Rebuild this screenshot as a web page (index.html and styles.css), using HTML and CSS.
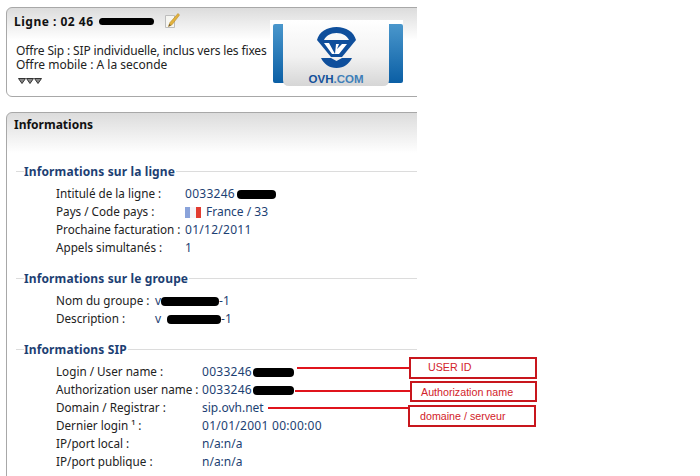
FILE: index.html
```html
<!DOCTYPE html>
<html lang="fr">
<head>
  <meta charset="UTF-8">
  <title>Ligne SIP</title>
  <link rel="stylesheet" href="styles.css">
</head>
<body>
  <div class="page">
    <!-- Line summary -->
    <div class="card card-top">
      <div class="card-text">
        <div class="line-title">
          <span class="num-title">Ligne : 02 46</span>
          <span class="mask mask-title"></span>
          <svg class="pencil" viewBox="0 0 16 16" width="16" height="16">
            <path d="M1.5 2.500h9v12h-9z" fill="#f6f6f2" stroke="#bdbdbd"/>
            <path d="M14 0.500 L6 9.500 L4.500 13.500 L8 11.800 L15.500 2z" fill="#e2b23c" stroke="#b98a28" stroke-width="0.6"/>
            <path d="M4.500 13.500l0.700-2.600 1.900 1.400z" fill="#6b5a38"/>
          </svg>
        </div>
        <div class="offer offer-sip">Offre Sip : SIP individuelle, inclus vers les fixes</div>
        <div class="offer">Offre mobile : A la seconde</div>
        <svg class="more" viewBox="0 0 24 6" width="24" height="6">
          <path d="M0.500 0.500h7l-3.500 5zM8.500 0.500h7l-3.500 5zM16.500 0.500h7l-3.500 5z" fill="#888" stroke="#333" stroke-width="1"/>
        </svg>
      </div>
      <div class="logo">
        <svg viewBox="0 0 133 66" width="133" height="66">
          <defs>
            <linearGradient id="side" x1="0" y1="0" x2="0" y2="1">
              <stop offset="0" stop-color="#4a97cc"/>
              <stop offset="1" stop-color="#0b5fa5"/>
            </linearGradient>
            <linearGradient id="tab" x1="0" y1="0" x2="0" y2="1">
              <stop offset="0" stop-color="#ffffff"/>
              <stop offset="0.55" stop-color="#f2f2f2"/>
              <stop offset="1" stop-color="#d6d6d6"/>
            </linearGradient>
          </defs>
          <rect width="133" height="66" fill="#fff"/>
          <rect x="3" y="4" width="130" height="59" rx="2" fill="url(#side)"/>
          <path d="M13 0H119V60q0 6-6 6H19q-6 0-6-6z" fill="url(#tab)"/>
          <!-- emblem -->
          <path d="M47 20C49 12 57 7 66.500 7S84 12 86 20H79C77 16 73 13 66.500 13S56 16 54 20z" fill="#0f4f9c"/>
          <path d="M47 20H86L72 37H61z" fill="#0f4f9c"/>
          <path d="M54 23H59L65 34H62zM66 24H69L67 29 72 24H77L69 34H65z" fill="#fff"/>
          <path d="M51 38H61L66.500 41 72 38H82C79 44 74 48 66.500 48S54 44 51 38z" fill="#0f4f9c"/>
          <text x="66" y="63" class="logo-text"><tspan fill="#12509a">OVH</tspan><tspan fill="#3f7fb8">.COM</tspan></text>
        </svg>
      </div>
    </div>

    <!-- Details -->
    <div class="card card-info">
      <div class="info-title">Informations</div>

      <div class="section section-line">
        <h3 class="section-title"><span>Informations sur la ligne</span></h3>
        <div class="row"><span class="label w-line">Intitulé de la ligne :</span><span class="value num">0033246<span class="mask mask-a"></span></span></div>
        <div class="row"><span class="label w-line">Pays / Code pays :</span><span class="value">
          <svg class="flag" viewBox="0 0 16 11" width="16" height="11">
            <rect width="16" height="11" fill="#f4f4f8"/>
            <rect width="5" height="11" fill="#8aa3da"/>
            <rect x="11" width="5" height="11" fill="#e23b30"/>
          </svg>France / 33</span></div>
        <div class="row"><span class="label w-line">Prochaine facturation :</span><span class="value num">01/12/2011</span></div>
        <div class="row"><span class="label w-line">Appels simultanés :</span><span class="value">1</span></div>
      </div>

      <div class="section section-group">
        <h3 class="section-title"><span>Informations sur le groupe</span></h3>
        <div class="row"><span class="label w-group">Nom du groupe :</span><span class="value">v<span class="mask mask-b"></span>-1</span></div>
        <div class="row"><span class="label w-group">Description :</span><span class="value">v<span class="mask mask-c"></span>-1</span></div>
      </div>

      <div class="section section-sip">
        <h3 class="section-title"><span>Informations SIP</span></h3>
        <div class="row"><span class="label w-sip">Login / User name :</span><span class="value num">0033246<span class="mask mask-d"></span></span></div>
        <div class="row"><span class="label w-sip">Authorization user name :</span><span class="value num">0033246<span class="mask mask-d"></span></span></div>
        <div class="row"><span class="label w-sip">Domain / Registrar :</span><span class="value">sip.ovh.net</span></div>
        <div class="row"><span class="label w-sip">Dernier login ¹ :</span><span class="value num">01/01/2001 00:00:00</span></div>
        <div class="row"><span class="label w-sip">IP/port local :</span><span class="value">n/a:n/a</span></div>
        <div class="row"><span class="label w-sip">IP/port publique :</span><span class="value">n/a:n/a</span></div>
      </div>
    </div>
  </div>

  <!-- Red notes drawn over the screenshot -->
  <div class="note note-user">USER ID</div>
  <div class="note note-auth">Authorization name</div>
  <div class="note note-domain">domaine / serveur</div>
  <div class="lead lead-user"></div>
  <div class="lead lead-auth"></div>
  <div class="lead lead-domain"></div>
</body>
</html>
```

FILE: styles.css
```css
* {
  margin: 0;
  padding: 0;
  box-sizing: border-box;
}

html, body {
  height: 100%;
  overflow: hidden;
}

body {
  position: relative;
  background-color: #fff;
  font-family: 'Noto Sans', sans-serif;
  font-size: 12px;
  color: #222;
}

.page {
  width: 417px;
  height: 476px;
  overflow: hidden;
  padding: 7px 0 0 6px;
}

/* Cards */
.card {
  width: 460px;
  border: 1px solid #a8a8a8;
  border-radius: 6px;
  background: linear-gradient(#dcdcdc, #fff 32px);
}

.card-top {
  height: 90px;
  display: flex;
  margin-bottom: 15px;
}

.card-text {
  width: 263px;
  padding: 5px 0 0 7px;
}

.line-title {
  display: flex;
  align-items: center;
  height: 16px;
  font-weight: bold;
  font-size: 12px;
  color: #111;
}

.num-title {
  letter-spacing: 0.5px;
}

.pencil {
  margin-left: 10px;
}

.offer {
  line-height: 14px;
  padding-left: 2px;
  white-space: nowrap;
}

.offer-sip {
  letter-spacing: -0.14px;
}

.line-title + .offer {
  margin-top: 15px;
}

.more {
  display: block;
  margin: 6px 0 0 4px;
}

.logo svg {
  display: block;
  margin-top: 12px;
}

.logo-text {
  font-family: 'Liberation Sans', sans-serif;
  font-weight: bold;
  font-size: 11.5px;
  text-anchor: middle;
}

.card-info {
  height: 400px;
  background: linear-gradient(#dcdcdc, #fff 40px);
}

.info-title {
  font-weight: bold;
  font-size: 12px;
  color: #111;
  padding: 3px 0 0 7px;
  height: 38px;
}

/* Sections */
.section-line {
  margin-top: 13px;
}

.section-group,
.section-sip {
  margin-top: 14px;
}

.section-title {
  font-size: 12px;
  font-weight: bold;
  color: #1d3f73;
  letter-spacing: 0.12px;
  height: 16px;
  line-height: 16px;
  margin: 0 0 5px 9px;
  background: linear-gradient(#dcdcdc, #dcdcdc) 0 7px / 100% 1px no-repeat;
}

.section-title span {
  background-color: #fff;
  padding: 0 1px 0 0;
  margin-left: 8px;
}

.row {
  display: flex;
  height: 18px;
  line-height: 18px;
  padding-left: 49px;
  white-space: nowrap;
}

.label {
  font-size: 11.7px;
  line-height: 16px;
}

.w-line {
  width: 129px;
}

.w-group {
  width: 99px;
}

.w-sip {
  width: 146px;
}

.value {
  color: #1d3f73;
  display: flex;
  align-items: center;
}

.num {
  letter-spacing: 0.28px;
}

.flag {
  margin-right: 5px;
}

/* Blacked out parts */
.mask {
  display: inline-block;
  height: 9px;
  background-color: #000;
  border-radius: 4px;
}

.mask-title {
  width: 55px;
  height: 7px;
  margin-left: 5px;
}

.mask-a {
  width: 39px;
  margin-left: 2px;
}

.mask-b {
  width: 58px;
}

.mask-c {
  width: 54px;
  margin-left: 6px;
}

.mask-d {
  width: 41px;
  margin-left: 1px;
}

/* Annotations */
.note {
  position: absolute;
  border: 2px solid #c8161d;
  color: #d2232a;
  font-family: 'Liberation Sans', sans-serif;
  font-size: 10.7px;
  background-color: #fff;
}

.note-user {
  left: 409px;
  top: 357px;
  width: 128px;
  height: 22px;
  padding: 2px 0 0 17px;
}

.note-auth {
  left: 410px;
  top: 381px;
  width: 127px;
  height: 21px;
  padding: 3px 0 0 9px;
}

.note-domain {
  left: 408px;
  top: 405px;
  width: 128px;
  height: 22px;
  padding: 3px 0 0 10px;
}

.lead {
  position: absolute;
  height: 2px;
  background-color: #e0141c;
}

.lead-user {
  left: 297px;
  top: 367px;
  width: 112px;
}

.lead-auth {
  left: 295px;
  top: 390px;
  width: 115px;
}

.lead-domain {
  left: 268px;
  top: 407px;
  width: 140px;
}
```
